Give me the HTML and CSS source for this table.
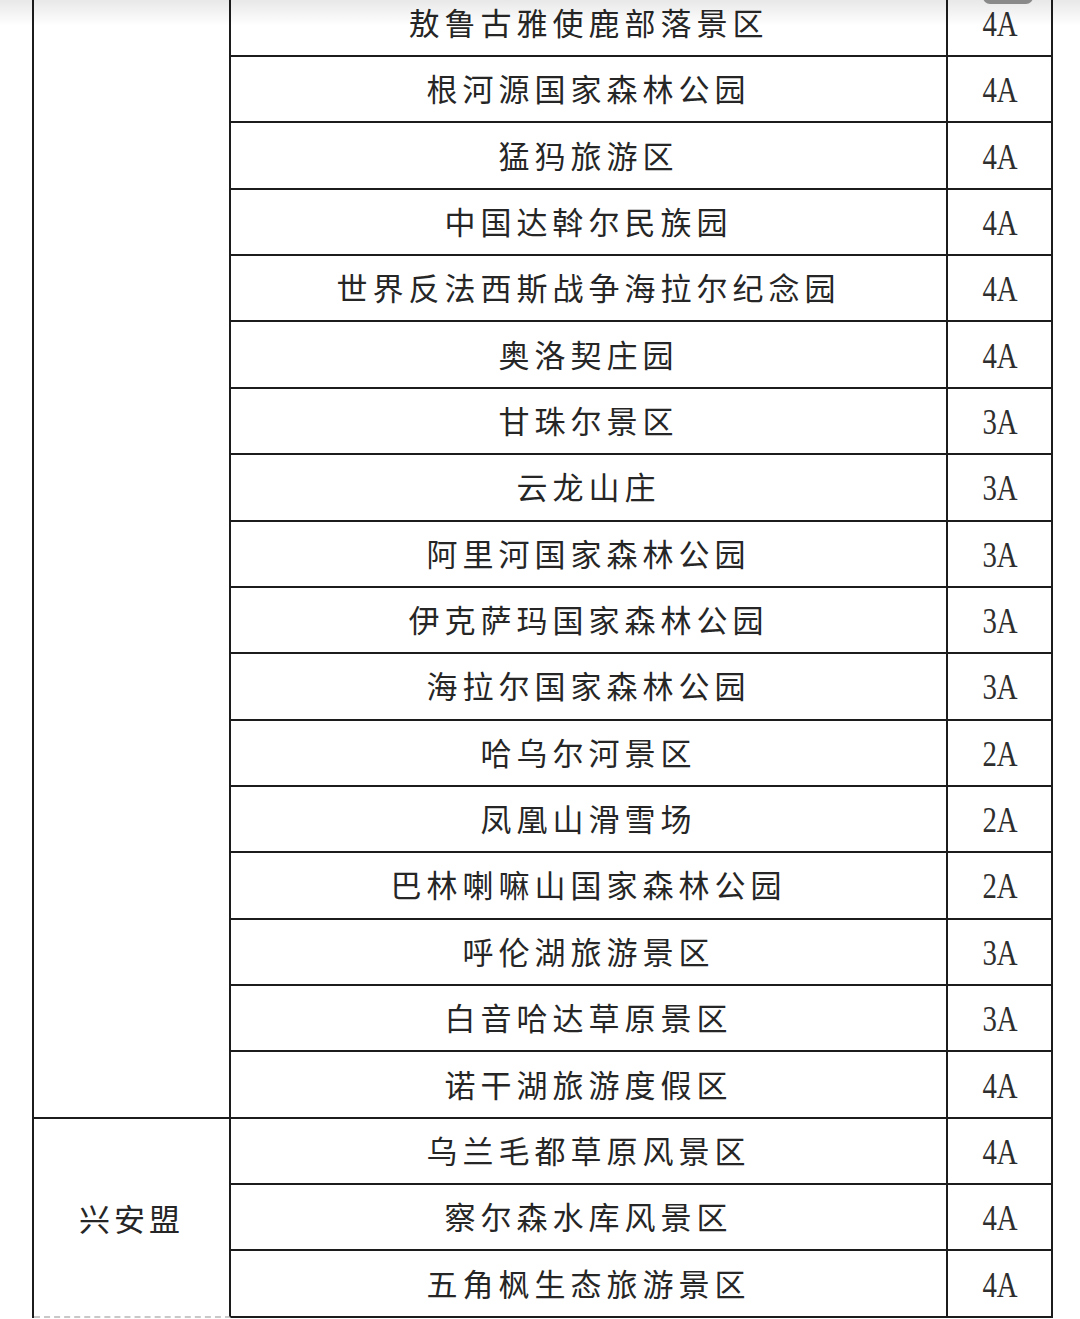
FILE: index.html
```html
<!DOCTYPE html>
<html lang="zh-CN">
<head>
<meta charset="utf-8">
<title>景区名录</title>
<link rel="stylesheet" href="styles.css">
</head>
<body>
<div class="shade"></div>
<div class="pill"></div>
<div class="sheet">
  <div class="group g1"></div>
  <div class="name">敖鲁古雅使鹿部落景区</div><div class="grade"><span>4A</span></div>
  <div class="name">根河源国家森林公园</div><div class="grade"><span>4A</span></div>
  <div class="name">猛犸旅游区</div><div class="grade"><span>4A</span></div>
  <div class="name">中国达斡尔民族园</div><div class="grade"><span>4A</span></div>
  <div class="name">世界反法西斯战争海拉尔纪念园</div><div class="grade"><span>4A</span></div>
  <div class="name">奥洛契庄园</div><div class="grade"><span>4A</span></div>
  <div class="name">甘珠尔景区</div><div class="grade"><span>3A</span></div>
  <div class="name">云龙山庄</div><div class="grade"><span>3A</span></div>
  <div class="name">阿里河国家森林公园</div><div class="grade"><span>3A</span></div>
  <div class="name">伊克萨玛国家森林公园</div><div class="grade"><span>3A</span></div>
  <div class="name">海拉尔国家森林公园</div><div class="grade"><span>3A</span></div>
  <div class="name">哈乌尔河景区</div><div class="grade"><span>2A</span></div>
  <div class="name">凤凰山滑雪场</div><div class="grade"><span>2A</span></div>
  <div class="name">巴林喇嘛山国家森林公园</div><div class="grade"><span>2A</span></div>
  <div class="name">呼伦湖旅游景区</div><div class="grade"><span>3A</span></div>
  <div class="name">白音哈达草原景区</div><div class="grade"><span>3A</span></div>
  <div class="name">诺干湖旅游度假区</div><div class="grade"><span>4A</span></div>
  <div class="group g2">兴安盟</div>
  <div class="name">乌兰毛都草原风景区</div><div class="grade"><span>4A</span></div>
  <div class="name">察尔森水库风景区</div><div class="grade"><span>4A</span></div>
  <div class="name">五角枫生态旅游景区</div><div class="grade"><span>4A</span></div>
</div>
</body>
</html>
```

FILE: styles.css
```css
html, body {
  margin: 0;
  padding: 0;
  background: #ffffff;
}

body {
  width: 1080px;
  height: 1319px;
  overflow: hidden;
  position: relative;
  font-family: "Noto Sans CJK SC", "Noto Sans", sans-serif;
  color: #262626;
}

.sheet {
  display: grid;
  grid-template-columns: 197px 717px 105px;
  grid-template-rows: repeat(20, 66.37px);
  margin-top: -9.37px;
  margin-left: 32px;
  width: 1021px;
  border-left: 2px solid #1c1c1c;
}

.sheet > div {
  box-sizing: border-box;
  border-right: 2px solid #1c1c1c;
  border-bottom: 2px solid #1c1c1c;
  display: flex;
  align-items: center;
  justify-content: center;
  white-space: nowrap;
}

.group {
  grid-column: 1;
  font-size: 31px;
  letter-spacing: 4px;
  font-weight: 400;
}

.g1 {
  grid-row: 1 / span 17;
}

.g2 {
  grid-row: 18 / span 3;
  border-bottom: 2px dashed #c8c8c8 !important;
}

.name {
  grid-column: 2;
  font-size: 31px;
  letter-spacing: 5px;
  font-weight: 400;
  padding-bottom: 3px;
}

.grade {
  grid-column: 3;
}

.grade span {
  display: inline-block;
  font-family: "Liberation Serif", "Times New Roman", serif;
  font-size: 36px;
  color: #2e2e2e;
  transform: scaleX(0.8);
  line-height: 1;
  padding-top: 2px;
}

.shade {
  position: absolute;
  left: 0;
  top: 0;
  width: 1080px;
  height: 26px;
  background: linear-gradient(to bottom, rgba(0, 0, 0, 0.09), rgba(0, 0, 0, 0));
  z-index: 2;
  pointer-events: none;
}

.pill {
  position: absolute;
  left: 983px;
  top: -10px;
  width: 50px;
  height: 14px;
  border-radius: 7px;
  background: #8a8a8a;
  z-index: 3;
}
```
